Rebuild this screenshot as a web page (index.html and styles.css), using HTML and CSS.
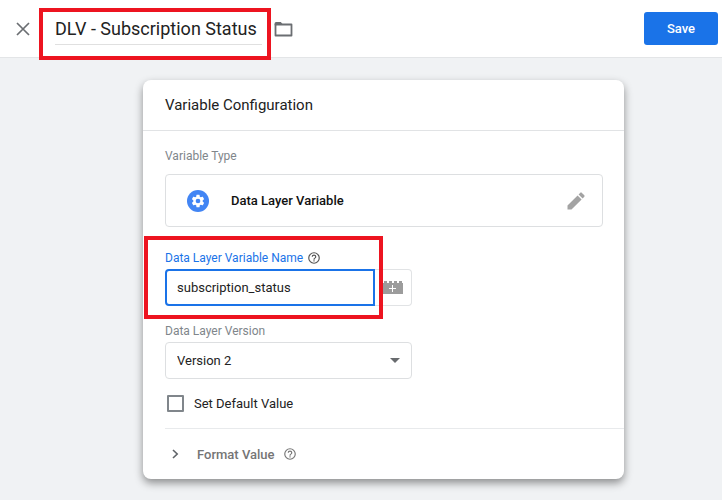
FILE: index.html
```html
<!DOCTYPE html>
<html lang="en">
<head>
<meta charset="utf-8">
<title>Variable Configuration</title>
<link rel="stylesheet" href="styles.css">
</head>
<body>
<header class="topbar">
  <button class="icon-btn close" type="button" aria-label="Close">
    <svg width="14" height="14" viewBox="0 0 14 14"><path d="M1 1l12 12M13 1L1 13" fill="none" stroke="#6b6e72" stroke-width="1.7"/></svg>
  </button>
  <div class="title-wrap marked">
    <input class="title" type="text" aria-label="Variable name" value="DLV - Subscription Status">
  </div>
  <button class="icon-btn folder" type="button" aria-label="Move to folder">
    <svg width="19" height="16" viewBox="0 0 19 16"><path d="M1.500 3.500h16v11h-16z" fill="none" stroke="#6b6e72" stroke-width="1.800" stroke-linejoin="round"/><path d="M.6 4.300V2.500Q.6 1 2 1h4.900l1.900 2.600z" fill="#6b6e72"/></svg>
  </button>
  <button class="save" type="button">Save</button>
</header>
<main class="page">
  <section class="card">
    <h1 class="card-title">Variable Configuration</h1>
    <div class="card-body">
      <p class="label">Variable Type</p>
      <button class="type-box" type="button">
        <svg class="type-icon" width="22" height="22" viewBox="0 0 22 22"><circle cx="11" cy="11" r="11" fill="#4285f4"/><path transform="translate(3.2 3.2) scale(.65)" fill="#fff" d="M19.14 12.94c.04-.3.06-.61.06-.94s-.02-.64-.07-.94l2.03-1.58a.49.49 0 0 0 .12-.61l-1.92-3.32a.49.49 0 0 0-.59-.22l-2.39.96a7 7 0 0 0-1.62-.94l-.36-2.54a.48.48 0 0 0-.48-.41h-3.84a.48.48 0 0 0-.47.41l-.36 2.54a7.400 7.400 0 0 0-1.620.94l-2.390-.96a.48.48 0 0 0-.59.22L2.740 8.870a.48.48 0 0 0 .12.61l2.030 1.580a6 6 0 0 0 0 1.880l-2.030 1.580a.49.49 0 0 0-.12.61l1.920 3.320c.12.22.37.29.59.22l2.390-.96c.5.38 1.030.7 1.620.94l.36 2.540c.05.24.24.41.48.41h3.840c.24 0 .44-.17.47-.41l.36-2.540a7 7 0 0 0 1.620-.94l2.390.96c.22.08.47 0 .59-.22l1.920-3.320a.48.48 0 0 0-.12-.61zM12 15.600a3.600 3.600 0 1 1 0-7.200 3.600 3.600 0 0 1 0 7.200z"/></svg>
        <span class="type-name">Data Layer Variable</span>
        <svg width="24" height="24" viewBox="0 0 24 24"><path fill="#a3a3a3" d="M3.500 16.500V20.500h4L17.600 10.400l-4-4zM20.300 7.700a1 1 0 0 0 0-1.400l-2.600-2.600a1 1 0 0 0-1.400 0l-1.700 1.700 4 4z"/></svg>
      </button>
      <div class="name-field">
        <div class="name-main marked">
          <div class="label-row">
            <label class="label active" for="dlv-name">Data Layer Variable Name</label>
            <svg class="help dark" width="14" height="14" viewBox="0 0 24 24"><path d="M11 18h2v-2h-2zm1-16a10 10 0 1 0 0 20 10 10 0 0 0 0-20zm0 18a8 8 0 1 1 0-16 8 8 0 0 1 0 16zm0-14a4 4 0 0 0-4 4h2a2 2 0 1 1 4 0c0 2-3 1.750-3 5h2c0-2.250 3-2.500 3-5a4 4 0 0 0-4-4z"/></svg>
          </div>
          <input class="name-input" id="dlv-name" type="text" value="subscription_status">
        </div>
        <button class="brick" type="button" aria-label="Insert variable">
          <svg width="20" height="13" viewBox="0 0 20 13"><path fill="#9c9c9c" d="M0 2h1V0h3v2h2V0h3v2h2V0h3v2h2V0h3v2h1v11H0z"/><path d="M9 4h1v3h3v1h-3v3H9V8H6V7h3z" fill="#fff"/></svg>
        </button>
      </div>
      <label class="label version-label" for="version">Data Layer Version</label>
      <div class="select-wrap">
        <select class="version" id="version"><option>Version 2</option><option>Version 1</option></select>
        <svg class="caret" width="10" height="5" viewBox="0 0 10 5"><path d="M0 0h10L5 5z" fill="#686b6e"/></svg>
      </div>
      <label class="check"><input class="check-box" type="checkbox">Set Default Value</label>
    </div>
    <div class="format">
      <button class="format-toggle" type="button" aria-expanded="false">
        <svg width="7" height="10" viewBox="0 0 7 10"><path d="M1 1l4.200 4L1 9" fill="none" stroke="#5f6368" stroke-width="1.600"/></svg>
        <span>Format Value</span>
      </button>
      <svg class="help" width="14" height="14" viewBox="0 0 24 24"><path d="M11 18h2v-2h-2zm1-16a10 10 0 1 0 0 20 10 10 0 0 0 0-20zm0 18a8 8 0 1 1 0-16 8 8 0 0 1 0 16zm0-14a4 4 0 0 0-4 4h2a2 2 0 1 1 4 0c0 2-3 1.750-3 5h2c0-2.250 3-2.500 3-5a4 4 0 0 0-4-4z"/></svg>
    </div>
  </section>
</main>
</body>
</html>
```
FILE: styles.css
```css
* {
  box-sizing: border-box;
}

body {
  margin: 0;
  min-height: 100vh;
  background: #f0f2f4;
  color: #222;
  font-family: Roboto, "Liberation Sans", sans-serif;
  font-size: 13px;
}

button,
input,
select {
  font: inherit;
  color: inherit;
}

button {
  padding: 0;
  border: 0;
  background: none;
  cursor: pointer;
}

svg {
  display: block;
  flex: none;
}

.topbar {
  display: flex;
  align-items: center;
  height: 58px;
  padding: 0 4px 0 16px;
  background: #fff;
  border-bottom: 1px solid #e3e5e7;
}

.title-wrap {
  margin: 0 12px 0 25px;
}

.title {
  display: block;
  width: 207px;
  height: 33px;
  padding: 0;
  border: 0;
  border-bottom: 1px solid #e0e0e0;
  outline: 0;
  font-size: 18px;
}

.save {
  width: 74px;
  height: 33px;
  margin-left: auto;
  border-radius: 3px;
  background: #1a73e8;
  color: #fff;
  font-weight: 500;
}

/* Red call-out frame drawn around a highlighted field */
.marked {
  position: relative;
}

.marked::after {
  content: "";
  position: absolute;
  inset: -4px -9px -15px -16px;
  border: 4px solid #ed1420;
  pointer-events: none;
}

.name-main.marked::after {
  inset: -13px -8px -13px -21px;
}

.page {
  padding: 22px 98px 20px 143px;
}

.card {
  border-radius: 8px;
  background: #fff;
  box-shadow: 0 4px 9px rgba(0, 0, 0, 0.42);
}

.card-title {
  margin: 0;
  padding: 0 22px;
  border-bottom: 1px solid #e1e3e5;
  font-size: 15px;
  font-weight: 400;
  line-height: 50px;
}

.card-body {
  padding: 16px 21px 16px 22px;
}

.label {
  display: block;
  margin: 0;
  color: #80868b;
  font-size: 12px;
  line-height: 18px;
}

.type-box {
  display: flex;
  align-items: center;
  width: 100%;
  height: 53px;
  margin-top: 9px;
  padding: 0 14px 0 21px;
  border: 1px solid #dddfe1;
  border-radius: 4px;
}

.type-name {
  flex: 1;
  margin-left: 22px;
  color: #111;
  font-weight: 500;
  text-align: left;
}

.name-field {
  display: flex;
  align-items: flex-end;
  width: 247px;
  margin-top: 22px;
}

.name-main {
  flex: 1;
}

.label-row {
  display: flex;
  align-items: center;
  gap: 4px;
  height: 18px;
  margin-bottom: 2px;
}

.active {
  color: #1a73e8;
}

.help {
  fill: #777;
}

.dark {
  fill: #555;
}

.name-input {
  display: block;
  width: 100%;
  height: 37px;
  padding: 0 10px;
  border: 2px solid #1a73e8;
  border-radius: 4px 0 0 4px;
  outline: 0;
}

.brick {
  display: flex;
  align-items: center;
  justify-content: flex-end;
  width: 37px;
  height: 37px;
  padding-right: 8px;
  border: 1px solid #e1e3e5;
  border-left: 0;
  border-radius: 0 4px 4px 0;
}

.version-label {
  margin-top: 16px;
}

.select-wrap {
  position: relative;
  width: 247px;
  margin-top: 2px;
}

.version {
  display: block;
  width: 100%;
  height: 37px;
  padding: 0 11px;
  border: 1px solid #dddfe1;
  border-radius: 4px;
  background: #fff;
  appearance: none;
}

.caret {
  position: absolute;
  top: 16px;
  right: 12px;
  pointer-events: none;
}

.check {
  display: flex;
  align-items: center;
  gap: 10px;
  height: 17px;
  margin-top: 16px;
  padding-left: 2px;
}

.check-box {
  width: 17px;
  height: 17px;
  margin: 0;
  border: 2px solid #80868b;
  border-radius: 1px;
  background: #fff;
  appearance: none;
}

.format {
  display: flex;
  align-items: center;
  gap: 8px;
  height: 51px;
  margin-left: 22px;
  padding-left: 7px;
  border-top: 1px solid #e8eaec;
  color: #757575;
}

.format-toggle {
  display: flex;
  align-items: center;
  gap: 18px;
  font-weight: 500;
}
```
